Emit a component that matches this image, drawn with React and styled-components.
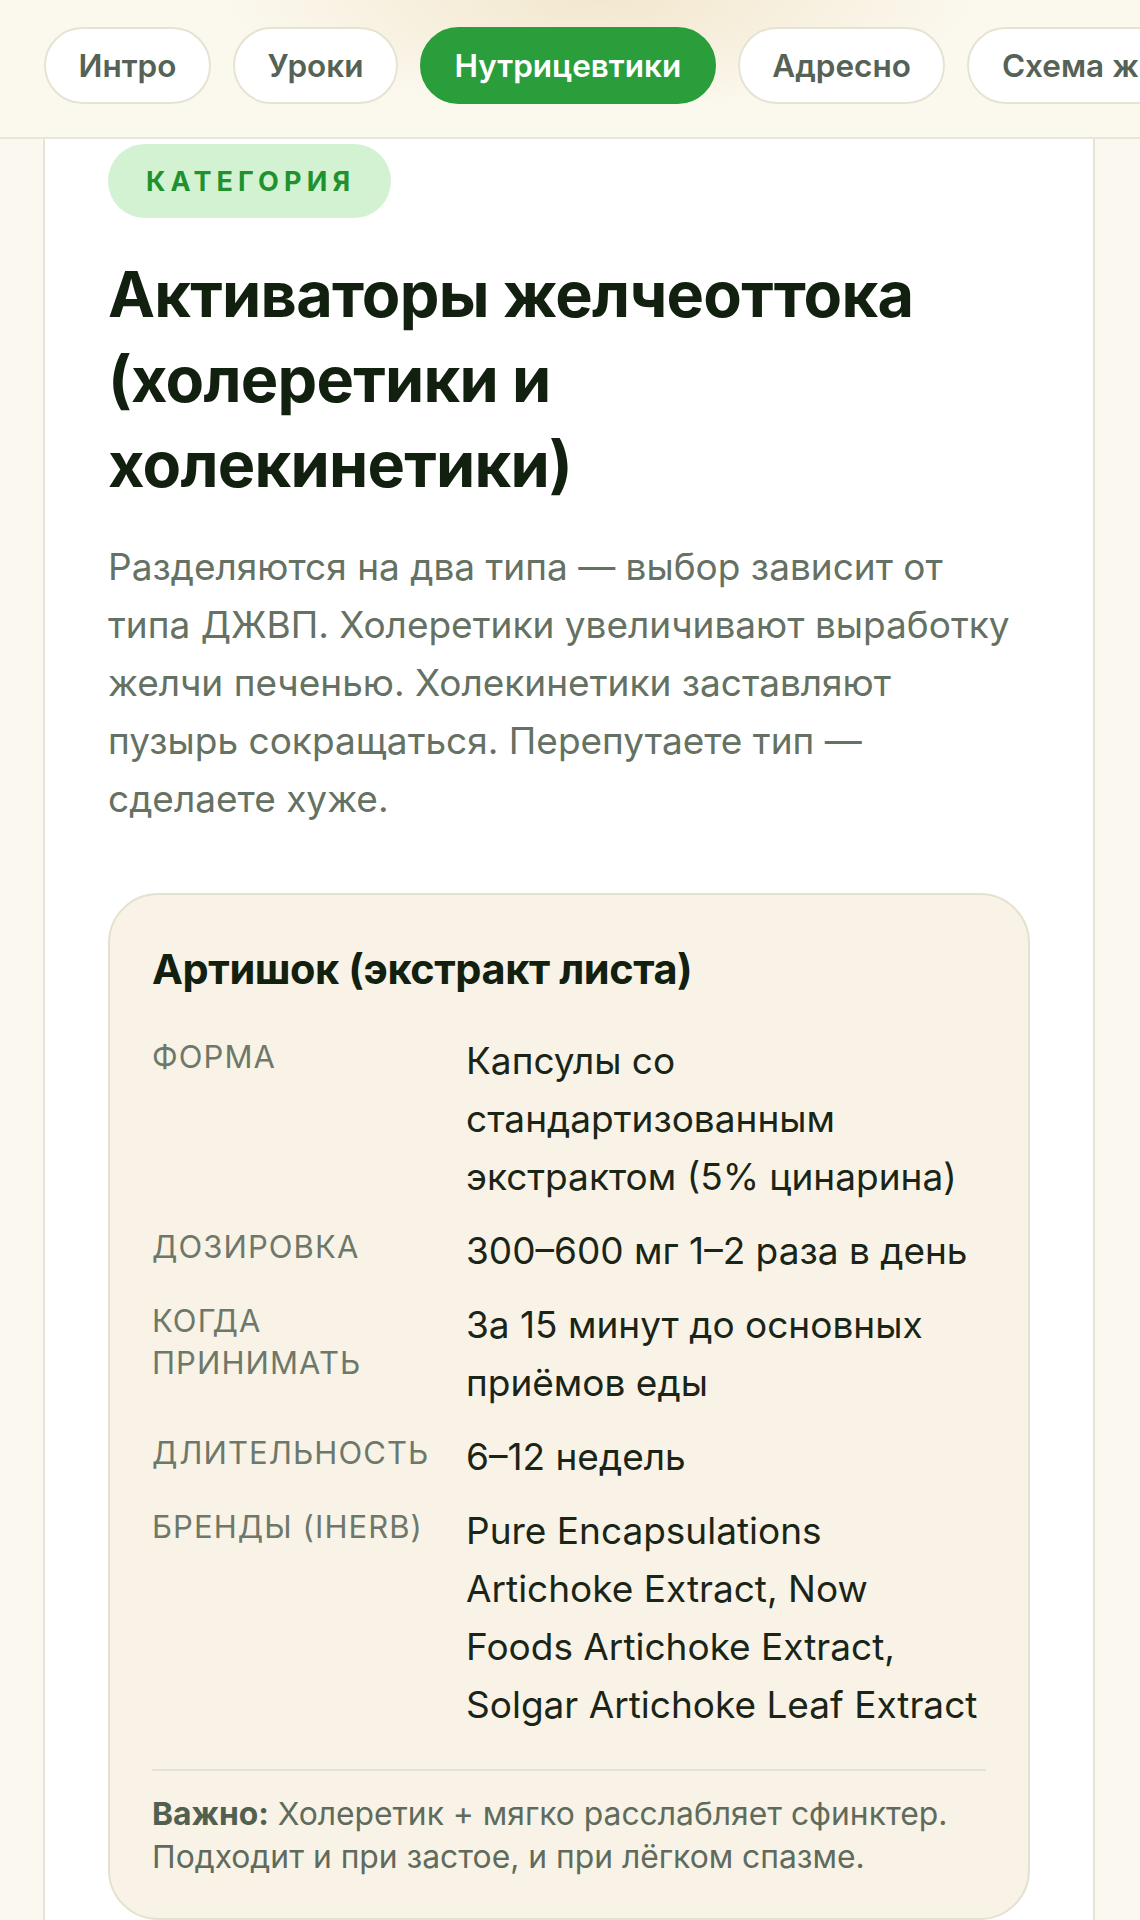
import React from "react";
import styled, { createGlobalStyle } from "styled-components";

const Global = createGlobalStyle`
  html, body { margin: 0; padding: 0; background: #faf8ef; }
  body { font-family: Inter, "Noto Sans", sans-serif; -webkit-font-smoothing: antialiased; }
  * { box-sizing: border-box; }
`;

const Page = styled.div`
  width: 1140px;
  min-height: 1920px;
  background: #faf8ef;
  overflow: hidden;
`;

const Header = styled.header`
  height: 139px;
  background:
    radial-gradient(ellipse 380px 110px at 600px 0px, rgba(240, 226, 196, 0.75), rgba(240, 226, 196, 0) 100%),
    #fbf8ee;
  border-bottom: 2px solid #e9e6d8;
  display: flex;
  align-items: flex-start;
  padding: 27px 0 0 44px;
  gap: 22px;
  overflow: hidden;
  white-space: nowrap;
`;

const Pill = styled.div`
  flex: none;
  height: 77px;
  padding: 0 32.5px;
  border-radius: 39px;
  display: flex;
  align-items: center;
  font-size: 31.5px;
  font-weight: 600;
  color: ${(p) => (p.$active ? "#ffffff" : "#556255")};
  background: ${(p) => (p.$active ? "#2a9e3b" : "#ffffff")};
  border: 2px solid ${(p) => (p.$active ? "#2a9e3b" : "#e7e3d3")};
`;

const Card = styled.main`
  margin: 0 45px 0 43px;
  background: #ffffff;
  border-left: 2px solid #e6e4d6;
  border-right: 2px solid #e6e4d6;
  padding: 5px 63px 0 63px;
  min-height: 1781px;
`;

const Badge = styled.div`
  display: inline-flex;
  align-items: center;
  height: 74px;
  padding: 0 36px 0 38px;
  border-radius: 37px;
  background: #d3f2d2;
  color: #1f922f;
  font-size: 27px;
  font-weight: 700;
  letter-spacing: 0.19em;
`;

const Title = styled.h1`
  margin: 34px 0 0;
  max-width: 900px;
  font-size: 63px;
  line-height: 85px;
  font-weight: 700;
  letter-spacing: -0.012em;
  color: #12200f;
`;

const Lead = styled.p`
  margin: 31px 0 0;
  font-size: 37px;
  line-height: 58px;
  color: #657163;
`;

const Supplement = styled.section`
  margin-top: 65px;
  background: #f8f3e6;
  border: 2px solid #e5e1cf;
  border-radius: 50px;
  padding: 48px 42px 40px 42px;
`;

const SupName = styled.h2`
  margin: 0;
  font-size: 41.5px;
  line-height: 52px;
  font-weight: 700;
  letter-spacing: -0.01em;
  color: #12200f;
`;

const Rows = styled.div`
  margin-top: 37px;
  display: flex;
  flex-direction: column;
  gap: 16px;
`;

const Row = styled.div`
  display: grid;
  grid-template-columns: 290px 514px;
  column-gap: 24px;
`;

const Label = styled.div`
  padding-top: 4px;
  font-size: 31px;
  line-height: 42px;
  text-transform: uppercase;
  letter-spacing: 0.035em;
  color: #6e786a;
`;

const Value = styled.div`
  font-size: 37px;
  line-height: 58px;
  color: #1a2518;
`;

const Divider = styled.hr`
  margin: 35px 0 0;
  border: 0;
  height: 2px;
  background: #e6e2d3;
`;

const Note = styled.p`
  margin: 21px 0 0;
  font-size: 31.8px;
  line-height: 43px;
  color: #5f6b5c;
  b { font-weight: 700; color: #526050; }
`;

const tabs = ["Интро", "Уроки", "Нутрицевтики", "Адресно", "Схема жизни"];

const rows = [
  ["Форма", "Капсулы со стандартизованным экстрактом (5% цинарина)"],
  ["Дозировка", "300–600 мг 1–2 раза в день"],
  ["Когда принимать", "За 15 минут до основных приёмов еды"],
  ["Длительность", "6–12 недель"],
  ["Бренды (iHerb)", "Pure Encapsulations Artichoke Extract, Now Foods Artichoke Extract, Solgar Artichoke Leaf Extract"],
];

export default function App() {
  return (
    <Page>
      <Global />
      <Header>
        {tabs.map((t) => (
          <Pill key={t} $active={t === "Нутрицевтики"}>{t}</Pill>
        ))}
      </Header>
      <Card>
        <Badge>КАТЕГОРИЯ</Badge>
        <Title>Активаторы желчеоттока (холеретики и холекинетики)</Title>
        <Lead>
          Разделяются на два типа — выбор зависит от типа ДЖВП. Холеретики увеличивают выработку желчи печенью.
          Холекинетики заставляют пузырь сокращаться. Перепутаете тип — сделаете хуже.
        </Lead>
        <Supplement>
          <SupName>Артишок (экстракт листа)</SupName>
          <Rows>
            {rows.map(([l, v]) => (
              <Row key={l}>
                <Label>{l}</Label>
                <Value>{v}</Value>
              </Row>
            ))}
          </Rows>
          <Divider />
          <Note>
            <b>Важно:</b> Холеретик + мягко расслабляет сфинктер. Подходит и при застое, и при лёгком спазме.
          </Note>
        </Supplement>
      </Card>
    </Page>
  );
}
